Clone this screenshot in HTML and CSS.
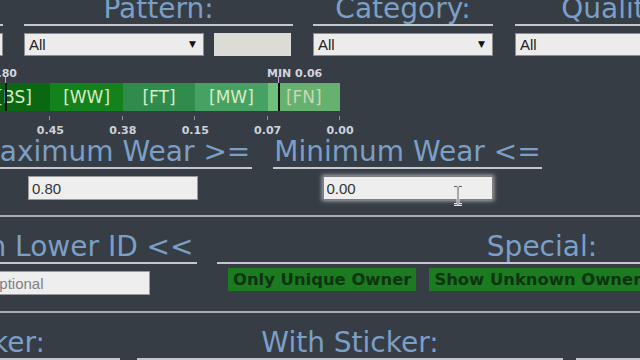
FILE: index.html
```html
<!DOCTYPE html>
<html lang="en">
	<head>
		<title>Item search</title>
		<meta charset="UTF-8">
		<link rel="stylesheet" href="styles.css">
	</head>
	<body>
		<div class="page">
			<!-- filtres du haut -->
			<div class="row filters">
				<div class="col colPrev">
					<h2 class="title">Weapon:</h2>
					<div class="ctrl ctrlEnd">
						<span class="pick"><select><option>All</option></select></span>
					</div>
				</div>
				<div class="col colPattern">
					<h2 class="title">Pattern:</h2>
					<div class="ctrl">
						<span class="pick"><select><option>All</option></select></span>
						<input class="patternBox" type="text">
					</div>
				</div>
				<div class="col colCategory">
					<h2 class="title">Category:</h2>
					<div class="ctrl">
						<span class="pick"><select><option>All</option></select></span>
					</div>
				</div>
				<div class="col colQuality">
					<h2 class="title">Quality:</h2>
					<div class="ctrl">
						<span class="pick"><select><option>All</option></select></span>
					</div>
				</div>
			</div>

			<!-- barre d'usure -->
			<div class="wear">
				<div class="bar">
					<div class="seg segBS">[BS]</div>
					<div class="seg segWW">[WW]</div>
					<div class="seg segFT">[FT]</div>
					<div class="seg segMW">[MW]</div>
					<div class="seg segFN">[FN]</div>
					<div class="shade" style="left:0;width:27px"></div>
					<div class="shade" style="left:301px;right:0"></div>
					<div class="mark markMax" style="left:27px"><span>MAX 0.80</span></div>
					<div class="mark markMin" style="left:300px"><span>MIN 0.06</span></div>
				</div>
				<div class="scale">
					<div class="step"><span>0.45</span></div>
					<div class="step"><span>0.38</span></div>
					<div class="step"><span>0.15</span></div>
					<div class="step"><span>0.07</span></div>
					<div class="step"><span>0.00</span></div>
				</div>
			</div>

			<div class="row wearRow">
				<div class="col colMax">
					<h2 class="title">Maximum Wear &gt;=</h2>
					<div class="ctrl ctrlCenter">
						<input class="field" type="text" value="0.80">
					</div>
				</div>
				<div class="col colMin">
					<h2 class="title">Minimum Wear &lt;=</h2>
					<div class="ctrl ctrlCenter">
						<span class="focusWrap">
							<input class="field fieldFocus" type="text" value="0.00">
							<svg class="ibeam" width="12" height="21" viewBox="0 0 12 21">
								<path d="M2 1.5h3l1 1 1-1h3M6 2.5v16M2 19.5h3l1-1 1 1h3" fill="none" stroke="#e8e8e8" stroke-width="3"/>
								<path d="M2 1.5h3l1 1 1-1h3M6 2.5v16M2 19.5h3l1-1 1 1h3" fill="none" stroke="#6a6a6a" stroke-width="1"/>
							</svg>
						</span>
					</div>
				</div>
			</div>

			<hr class="sep">

			<div class="row idRow">
				<div class="col colLower">
					<h2 class="title">Than Lower ID &lt;&lt;</h2>
					<div class="ctrl">
						<input class="field fieldId" type="text" placeholder="optional">
					</div>
				</div>
				<div class="col colSpecial">
					<h2 class="title">Special:</h2>
					<div class="ctrl btnRow">
						<button class="toggle">Only Unique Owner</button>
						<button class="toggle">Show Unknown Owner</button>
					</div>
				</div>
			</div>

			<hr class="sep sepLow">

			<div class="row stickerRow">
				<div class="col colNoSticker">
					<h2 class="title">Sticker:</h2>
				</div>
				<div class="col colSticker">
					<h2 class="title">With Sticker:</h2>
				</div>
				<div class="col colStickerNext">
					<h2 class="title">&nbsp;</h2>
				</div>
			</div>
		</div>
	</body>
</html>
```

FILE: styles.css
```css
html, body {
	margin : 0;
	padding : 0;
}
body {
	width : 640px;
	height : 360px;
	overflow : hidden;
	background-color : #373d45;
	font-family : "DejaVu Sans", Verdana, sans-serif;
}

.page {
	margin-top : -6px;
}
.row {
	display : flex;
}
.col {
	flex : none;
}
.title {
	margin : 0;
	font-weight : normal;
	font-size : 28px;
	line-height : 30px;
	color : #7b9fc6;
	text-align : center;
	white-space : nowrap;
	border-bottom : 2px solid #c3c8ce;
}
.ctrl {
	display : flex;
	gap : 10px;
	margin-top : 7px;
}
.ctrlEnd {
	justify-content : flex-end;
}
.ctrlCenter {
	justify-content : center;
}

/* colonnes du haut */
.filters {
	margin-left : -147px;
}
.colPrev {
	width : 150px;
}
.colPattern {
	width : 269px;
	margin-left : 21px;
}
.colCategory {
	width : 180px;
	margin-left : 20px;
}
.colQuality {
	width : 200px;
	margin-left : 22px;
}

.pick {
	position : relative;
	display : block;
	width : 180px;
}
.pick select {
	-webkit-appearance : none;
	appearance : none;
	display : block;
	width : 100%;
	height : 23px;
	margin : 0;
	padding : 0 0 0 4px;
	background-color : #ececec;
	border : 1px solid #8e8e8e;
	border-radius : 0;
	color : #222;
	font-family : "Liberation Sans", Arial, sans-serif;
	font-size : 15px;
	outline : none;
}
.pick::after {
	content : "\25BC";
	position : absolute;
	right : 8px;
	top : 6px;
	font-size : 9px;
	line-height : 10px;
	color : #111;
	pointer-events : none;
}
.patternBox {
	width : 77px;
	height : 23px;
	margin : 0;
	padding : 0;
	border : none;
	background-color : #dcdcd6;
	box-sizing : border-box;
}

/* barre d'usure */
.wear {
	width : 362px;
	margin-left : -22px;
	margin-top : 27px;
}
.bar {
	position : relative;
	display : flex;
	height : 28px;
}
.seg {
	flex : 1;
	text-align : center;
	font-size : 17px;
	line-height : 28px;
	color : #d9ebc4;
	white-space : nowrap;
}
.segBS { background-color : #0b6812; }
.segWW { background-color : #13811c; }
.segFT { background-color : #2f8c4c; }
.segMW { background-color : #46a263; }
.segFN { background-color : #6fc07a; }
.shade {
	position : absolute;
	top : 0;
	bottom : 0;
	background-color : rgba(0, 0, 0, 0.08);
}
.mark {
	position : absolute;
	top : 0;
	bottom : 0;
	width : 2px;
	background-color : #111;
}
.mark::before {
	content : "";
	position : absolute;
	left : 0;
	top : -7px;
	width : 1px;
	height : 7px;
	background-color : #b7a8d6;
}
.mark span {
	position : absolute;
	top : -16px;
	font-size : 11px;
	line-height : 13px;
	font-weight : bold;
	color : #d2d5df;
	white-space : nowrap;
}
.markMax span {
	right : -10px;
}
.markMin span {
	left : -11px;
}
.scale {
	display : flex;
	height : 6px;
	margin-top : 4px;
}
.step {
	position : relative;
	flex : 1;
}
.step::after {
	content : "";
	position : absolute;
	right : 0;
	top : 1px;
	width : 1px;
	height : 4px;
	background-color : #8d939a;
}
.step span {
	position : absolute;
	right : 0;
	top : 9px;
	transform : translateX(50%);
	font-size : 11px;
	line-height : 13px;
	font-weight : bold;
	color : #cdd3da;
}

/* usure min / max */
.wearRow {
	margin-left : -26px;
	margin-top : 16px;
}
.colMax {
	width : 278px;
}
.colMin {
	width : 269px;
	margin-left : 21px;
}
.field {
	width : 170px;
	height : 24px;
	margin : 0;
	padding : 0 0 0 3px;
	box-sizing : border-box;
	background-color : #eeeeee;
	border : 1px solid #9a9a9a;
	color : #333;
	font-family : "Liberation Sans", Arial, sans-serif;
	font-size : 15px;
	outline : none;
}
.fieldFocus {
	border-color : #7c7c7c;
	box-shadow : 0 0 4px 1px #a9adb2;
}
.focusWrap {
	position : relative;
	display : block;
}
.ibeam {
	position : absolute;
	left : 129px;
	top : 9px;
}

.sep {
	margin : 15px 0 0 0;
	height : 2px;
	border : none;
	background-color : #a9aeb4;
}
.sepLow {
	margin-top : 16px;
}

/* id + special */
.idRow {
	margin-left : -67px;
	margin-top : 15px;
}
.colLower {
	width : 264px;
}
.colSpecial {
	width : 650px;
	margin-left : 20px;
}
.fieldId {
	width : 163px;
	margin-left : 54px;
	padding-left : 3px;
}
.fieldId::placeholder {
	color : #808080;
}
.btnRow {
	gap : 13px;
	margin-top : 4px;
	padding-left : 11px;
}
.toggle {
	height : 23px;
	margin : 0;
	padding : 0 5px;
	border : none;
	border-radius : 0;
	background-color : #1c7a20;
	color : #0d3511;
	font-family : "DejaVu Sans", Verdana, sans-serif;
	font-weight : bold;
	font-size : 16.4px;
	line-height : 23px;
	white-space : nowrap;
}

/* stickers */
.stickerRow {
	margin-left : -135px;
	margin-top : 15px;
}
.colNoSticker {
	width : 255px;
}
.colSticker {
	width : 426px;
	margin-left : 17px;
}
.colStickerNext {
	width : 200px;
	margin-left : 13px;
}
```
